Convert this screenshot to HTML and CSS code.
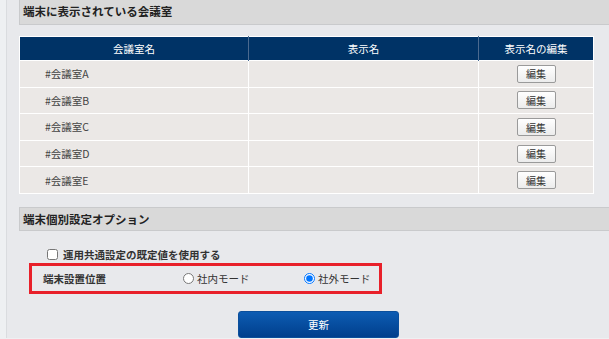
FILE: index.html
```html
<!DOCTYPE html>
<html lang="ja">
<head>
    <meta charset="UTF-8">
    <meta name="viewport" content="width=device-width, initial-scale=1.0">
    <title>端末設定</title>
    <link rel="stylesheet" href="styles.css">
</head>
<body>
    <div class="main">
        <h2 class="section-title first">端末に表示されている会議室</h2>
        <table class="room-table">
            <colgroup>
                <col class="col-name">
                <col class="col-display">
                <col class="col-edit">
            </colgroup>
            <thead>
                <tr>
                    <th>会議室名</th>
                    <th>表示名</th>
                    <th>表示名の編集</th>
                </tr>
            </thead>
            <tbody>
                <tr><td class="room-name">#会議室A</td><td></td><td class="edit"><button type="button" class="edit-button">編集</button></td></tr>
                <tr><td class="room-name">#会議室B</td><td></td><td class="edit"><button type="button" class="edit-button">編集</button></td></tr>
                <tr><td class="room-name">#会議室C</td><td></td><td class="edit"><button type="button" class="edit-button">編集</button></td></tr>
                <tr><td class="room-name">#会議室D</td><td></td><td class="edit"><button type="button" class="edit-button">編集</button></td></tr>
                <tr><td class="room-name">#会議室E</td><td></td><td class="edit"><button type="button" class="edit-button">編集</button></td></tr>
            </tbody>
        </table>

        <h2 class="section-title">端末個別設定オプション</h2>
        <div class="options">
            <label class="check-row">
                <input type="checkbox" class="check">
                <span>運用共通設定の既定値を使用する</span>
            </label>
            <div class="location-box">
                <span class="location-label">端末設置位置</span>
                <label class="radio-item inside">
                    <input type="radio" name="location" class="radio">
                    <span>社内モード</span>
                </label>
                <label class="radio-item outside">
                    <input type="radio" name="location" class="radio" checked>
                    <span>社外モード</span>
                </label>
            </div>
            <button type="button" class="update-button">更新</button>
        </div>
    </div>
</body>
</html>
```

FILE: styles.css
```css
:root {
    --navy: #003366;
    --row-bg: #ebe8e6;
    --page-bg: #e8e9ec;
    --bar-bg: #d9d9d9;
    --alert-red: #e8202a;
}

body {
    margin: 0;
    padding: 0;
    background: #eef0f2;
    font-family: "Noto Sans CJK JP", "Noto Sans", sans-serif;
    font-size: 10.5px;
    color: #333;
    height: 339px;
    overflow: hidden;
}

.main {
    margin-left: 6px;
    width: 591px;
    height: 339px;
    background: var(--page-bg);
    border-left: 1px solid #dadcdf;
    border-right: 1px solid #d6d8db;
    padding: 0 3px 0 12px;
}

.section-title {
    margin: 13px 0 0 0;
    height: 22px;
    line-height: 22px;
    padding-left: 3px;
    background: var(--bar-bg);
    border: 1px solid #c9cacc;
    font-size: 11.5px;
    font-weight: bold;
    color: #222;
}

.section-title.first {
    margin-top: -1px;
    height: 24px;
}

.room-table {
    margin-top: 11px;
    width: 574px;
    border-collapse: collapse;
    border: 1px solid #fff;
    table-layout: fixed;
}

.col-name { width: 229px; }
.col-display { width: 230px; }
.col-edit { width: 115px; }

.room-table th {
    height: 23px;
    padding: 0;
    background: var(--navy);
    color: #fff;
    font-weight: normal;
    font-size: 10.5px;
    border-left: 1px solid #4b6a8f;
}

.room-table th:first-child {
    border-left: none;
}

.room-table td {
    height: 25.6px;
    padding: 0;
    background: var(--row-bg);
    border: 1px solid #fff;
    color: #444;
}

.room-name {
    padding-left: 25px !important;
}

.edit {
    text-align: center;
}

.edit-button {
    width: 39px;
    height: 18px;
    padding: 0;
    border: 1px solid #9a9a9a;
    border-radius: 2px;
    background: linear-gradient(#ffffff, #ececec);
    font-family: inherit;
    font-size: 10px;
    color: #333;
    vertical-align: middle;
}

.options {
    padding-top: 17px;
}

.check-row {
    display: flex;
    align-items: center;
    gap: 5px;
    margin-left: 28px;
    height: 14px;
    font-weight: bold;
}

.check {
    margin: 0;
    width: 11px;
    height: 11px;
}

.location-box {
    display: flex;
    align-items: center;
    margin: 1px 0 0 10px;
    width: 347px;
    height: 25px;
    border: 3px solid var(--alert-red);
}

.location-label {
    font-weight: bold;
    margin-left: 11px;
    width: 140px;
}

.radio-item {
    display: flex;
    align-items: center;
    gap: 3px;
}

.radio {
    margin: 0;
    width: 11px;
    height: 11px;
}

.inside {
    width: 121px;
}

.update-button {
    display: block;
    margin: 17px 0 0 219px;
    width: 161px;
    height: 27px;
    border: 1px solid #0b4f9c;
    border-radius: 3px;
    background: linear-gradient(#0d5cb3, #003f8c);
    color: #fff;
    font-family: inherit;
    font-size: 10.5px;
}
```
